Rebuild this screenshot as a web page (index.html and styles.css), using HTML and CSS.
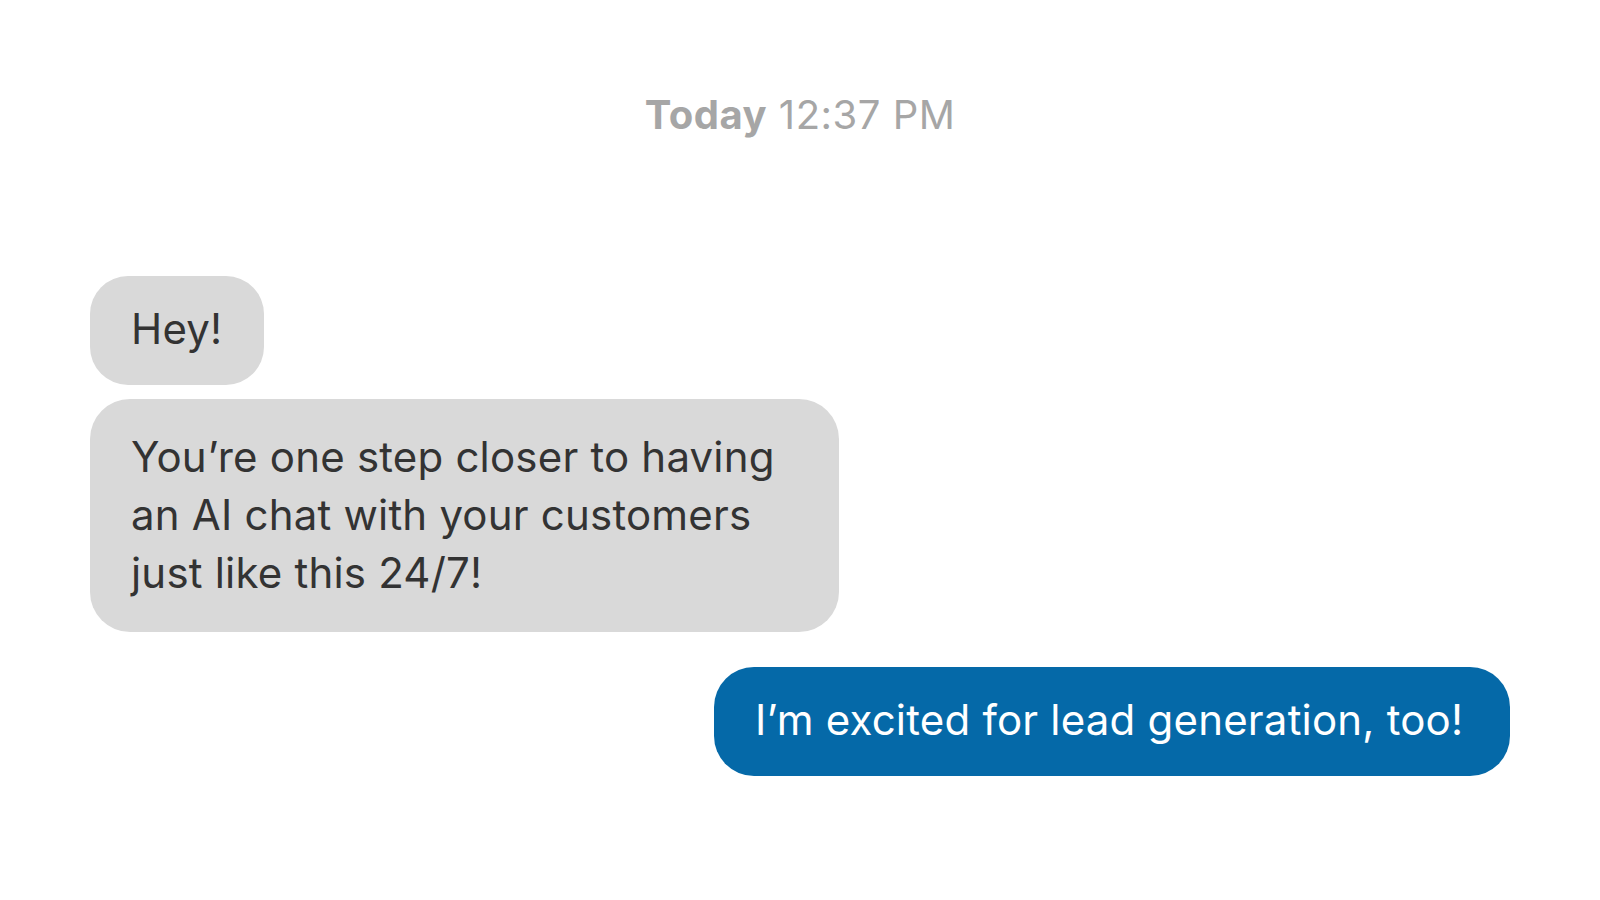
FILE: index.html
```html
<!DOCTYPE html>
<html lang="en">
<head>
    <meta charset="UTF-8">
    <meta name="viewport" content="width=device-width, initial-scale=1.0">
    <title>Chat</title>
    <link rel="stylesheet" href="styles.css">
</head>
<body>
    <div class="chat">
        <div class="time"><b>Today</b> 12:37 PM</div>

        <div class="messages">
            <div class="bubble incoming hey">Hey!</div>
            <div class="bubble incoming long">You’re one step closer to having<br>an AI chat with your customers<br>just like this 24/7!</div>
            <div class="bubble outgoing">I’m excited for lead generation, too!</div>
        </div>
    </div>
</body>
</html>
```

FILE: styles.css
```css
body {
    margin: 0;
    background-color: #fff;
    font-family: Inter, "Noto Sans", sans-serif;
}
.chat {
    width: 1600px;
    height: 900px;
    padding: 88px 90px 0;
    box-sizing: border-box;
}
.time {
    text-align: center;
    font-size: 40px;
    line-height: 54px;
    color: #a6a6a6;
    letter-spacing: 0.5px;
}
.time b {
    font-weight: 700;
}
.messages {
    display: flex;
    flex-direction: column;
    align-items: flex-start;
    margin-top: 134px;
}
.bubble {
    font-size: 42px;
    line-height: 58px;
    color: #333;
    background-color: #d9d9d9;
    border-radius: 40px;
    padding: 24px 41px 27px;
    letter-spacing: 0.2px;
    white-space: nowrap;
    box-sizing: border-box;
}
.hey {
    width: 174px;
    border-radius: 38px;
}
.long {
    width: 749px;
    margin-top: 14px;
    padding: 29px 41px 30px;
}
.outgoing {
    align-self: flex-end;
    width: 796px;
    margin-top: 35px;
    background-color: #0569a8;
    color: #fff;
}
```
